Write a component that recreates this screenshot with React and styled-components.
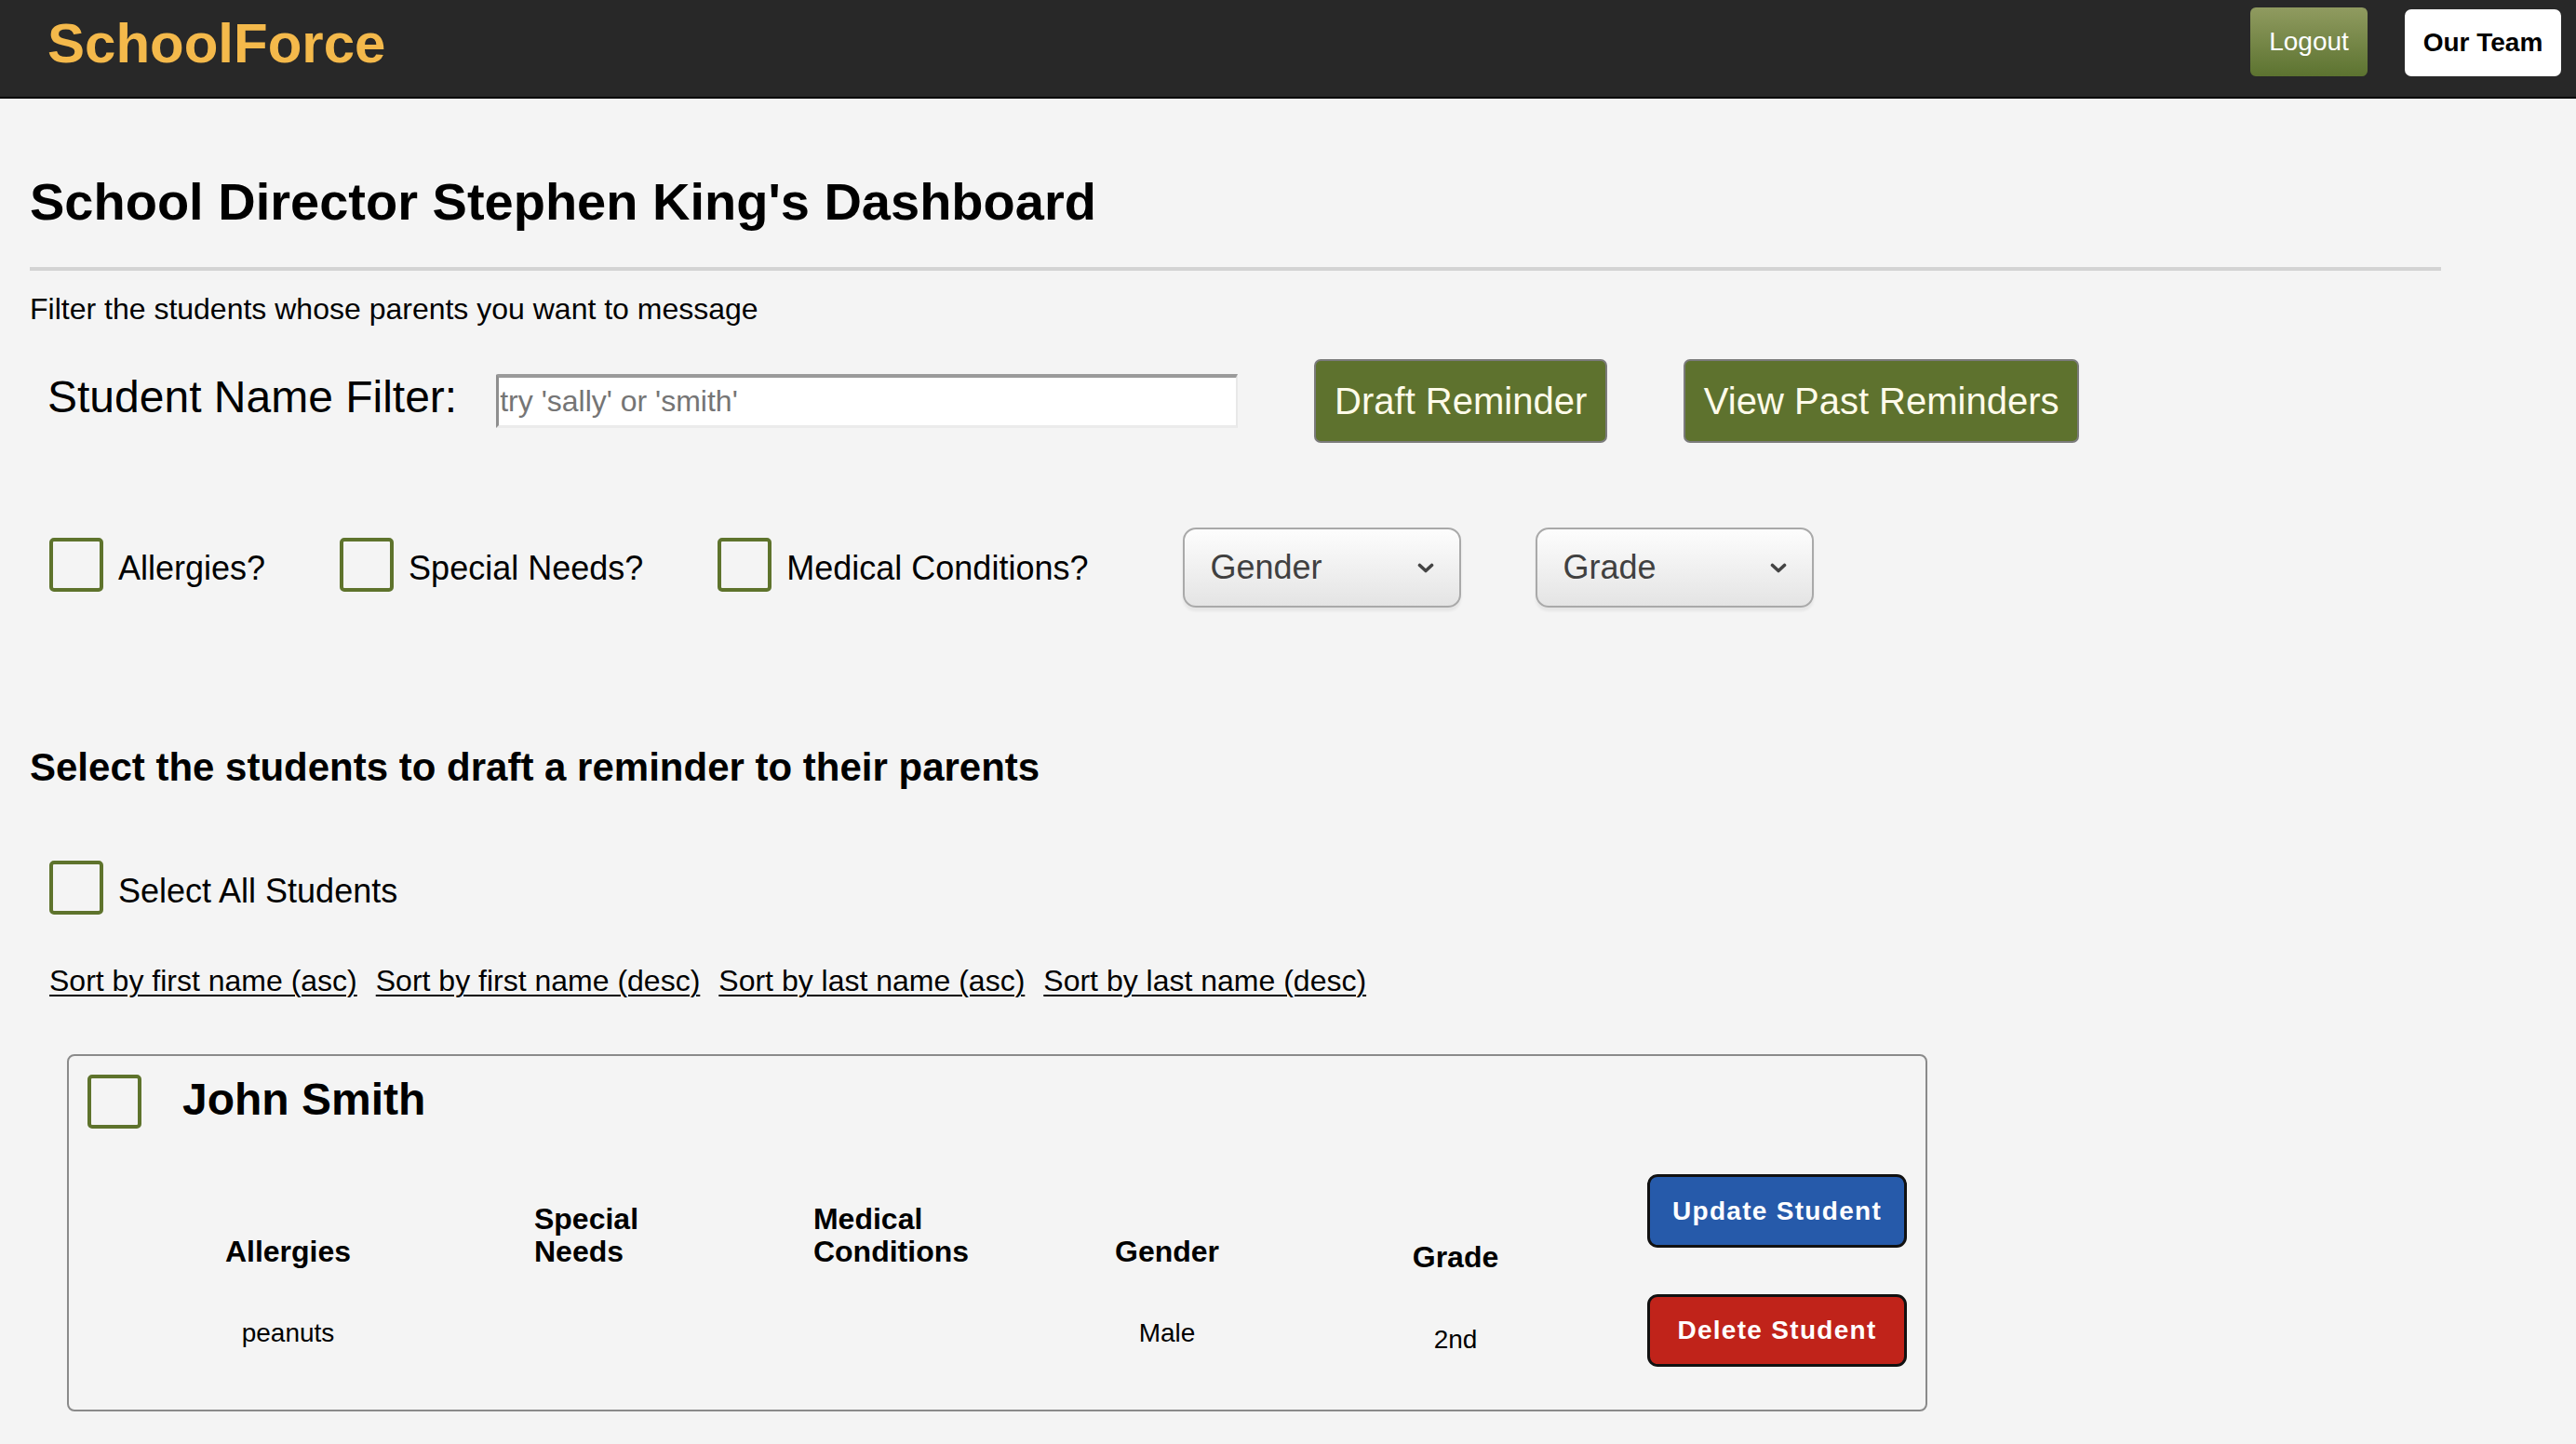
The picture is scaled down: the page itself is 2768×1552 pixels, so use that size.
import React from "react";
import styled, { createGlobalStyle } from "styled-components";

const GlobalStyle = createGlobalStyle`
  * { box-sizing: border-box; }
  html, body { margin: 0; padding: 0; background: #f4f4f4; }
  body {
    font-family: "Liberation Sans", Arial, Helvetica, sans-serif;
    color: #000;
  }
`;

const Page = styled.div`
  min-height: 1552px;
  background: #f4f4f4;
`;

const TopBar = styled.header`
  height: 106px;
  background: #282828;
  border-bottom: 2px solid #000;
  display: flex;
  justify-content: space-between;
  align-items: flex-start;
  padding: 0 16px 0 51px;
`;

const Logo = styled.div`
  margin-top: 12px;
  font-size: 60px;
  line-height: 69px;
  font-weight: 700;
  color: #f4b94b;
`;

const Nav = styled.nav`
  display: flex;
  align-items: flex-start;
  gap: 40px;
  margin-top: 8px;
`;

const LogoutButton = styled.button`
  width: 126px;
  height: 74px;
  border: none;
  border-radius: 6px;
  background: linear-gradient(#909b60, #5c7330);
  color: #fff;
  font-family: inherit;
  font-size: 28px;
  display: flex;
  align-items: center;
  justify-content: center;
  padding: 0;
`;

const TeamButton = styled.button`
  width: 168px;
  height: 72px;
  margin-top: 2px;
  border: none;
  border-radius: 7px;
  background: #fff;
  color: #000;
  font-family: inherit;
  font-size: 28px;
  font-weight: 700;
  display: flex;
  align-items: center;
  justify-content: center;
  padding: 0;
`;

const Main = styled.main`
  padding: 79px 0 80px 32px;
`;

const Title = styled.h1`
  margin: 0;
  font-size: 56px;
  line-height: 64px;
  font-weight: 700;
`;

const Divider = styled.hr`
  width: 2591px;
  height: 4px;
  margin: 38px 0 0;
  border: none;
  background: #d3d3d3;
`;

const Intro = styled.p`
  margin: 23px 0 0;
  font-size: 32px;
  line-height: 37px;
`;

const FilterRow = styled.div`
  display: flex;
  align-items: center;
  height: 90px;
  margin-top: 35px;
  padding-left: 19px;
`;

const FilterLabel = styled.label`
  font-size: 48px;
  line-height: 55px;
  margin: 0 42px 9px 0;
`;

const NameInput = styled.input`
  width: 797px;
  height: 58px;
  background: #fff;
  border-style: solid;
  border-width: 4px 2px 3px 3px;
  border-color: #9a9a9a #e8e8e8 #ebebeb #8e8e8e;
  border-radius: 2px 0 0 0;
  padding: 0 0 0 1px;
  font-family: inherit;
  font-size: 32px;
  color: #000;
  outline: none;
  &::placeholder { color: #757575; }
`;

const ActionButton = styled.button`
  width: ${(p) => p.$w}px;
  height: 90px;
  margin-left: 82px;
  padding: 0;
  border: 2px solid #7b7b7b;
  border-radius: 7px;
  background: #5e722e;
  color: #fffbea;
  font-family: inherit;
  font-size: 40px;
  display: flex;
  align-items: center;
  justify-content: center;
`;

const CheckRow = styled.div`
  display: flex;
  align-items: center;
  gap: 80px;
  height: 86px;
  margin-top: 91px;
  padding-left: 21px;
`;

const CheckGroup = styled.label`
  display: flex;
  align-items: center;
  gap: 16px;
`;

const Box = styled.span`
  display: block;
  flex-shrink: 0;
  width: 58px;
  height: 58px;
  border: 4px solid #5e732c;
  border-radius: 5px;
  margin-bottom: 7px;
`;

const CheckText = styled.span`
  font-size: 36px;
  line-height: 41px;
`;

const SelectBox = styled.div`
  width: 299px;
  height: 86px;
  margin-left: ${(p) => p.$offset || 0}px;
  border: 2px solid #a9a9a9;
  border-radius: 14px;
  background: linear-gradient(#fdfdfd, #e4e4e4);
  box-shadow: 0 4px 3px rgba(0, 0, 0, 0.06);
  display: flex;
  align-items: center;
  justify-content: space-between;
  padding: 0 27px 0 27px;
  font-size: 36px;
  color: #404040;
`;

const SectionTitle = styled.h2`
  margin: 148px 0 0;
  font-size: 42px;
  line-height: 48px;
  font-weight: 700;
`;

const SelectAllRow = styled.label`
  display: flex;
  align-items: center;
  gap: 16px;
  margin-top: 76px;
  padding-left: 21px;
`;

const SortBar = styled.div`
  display: flex;
  gap: 20px;
  margin-top: 46px;
  padding-left: 21px;
`;

const SortLink = styled.a`
  font-size: 32px;
  line-height: 37px;
  color: #000;
  text-decoration: underline;
  text-decoration-thickness: 2px;
  text-underline-offset: 4px;
`;

const StudentCard = styled.section`
  width: 1999px;
  margin: 60px 0 0 40px;
  border: 2px solid #8a8a8a;
  border-radius: 8px;
  padding: 19px 20px 46px 20px;
`;

const CardHead = styled.div`
  display: flex;
  align-items: center;
  gap: 44px;
`;

const StudentName = styled.h3`
  margin: 0 0 11px;
  font-size: 48px;
  line-height: 55px;
  font-weight: 700;
`;

const CardBody = styled.div`
  display: flex;
  align-items: flex-start;
  margin-top: 42px;
`;

const DataGrid = styled.div`
  display: grid;
  grid-template-columns: 321px 320px 335px 258px 362px;
  align-items: end;
  margin: 31px 0 0 55px;
`;

const HeadCell = styled.div`
  justify-self: center;
  text-align: left;
  font-size: 32px;
  line-height: 35px;
  font-weight: 700;
  margin-bottom: ${(p) => (p.$drop ? -6 : 0)}px;
`;

const ValueCell = styled.div`
  align-self: start;
  text-align: center;
  font-size: 28px;
  line-height: 32px;
  padding-top: ${(p) => (p.$drop ? 61 : 54)}px;
  min-height: 32px;
`;

const ButtonStack = styled.div`
  display: flex;
  flex-direction: column;
  gap: 50px;
  margin-left: 25px;
`;

const CardButton = styled.button`
  width: 279px;
  height: ${(p) => p.$h}px;
  border: 3px solid #111;
  border-radius: 11px;
  background: ${(p) => p.$bg};
  color: #fff;
  font-family: inherit;
  font-size: 28px;
  font-weight: 700;
  letter-spacing: 1.3px;
  display: flex;
  align-items: center;
  justify-content: center;
  padding: 0;
`;

const Chevron = () => (
  <svg width="18" height="11" viewBox="0 0 18 11" aria-hidden="true">
    <path
      d="M2.5 2.5 L9 8.5 L15.5 2.5"
      fill="none"
      stroke="#444"
      strokeWidth="3.6"
      strokeLinecap="round"
      strokeLinejoin="round"
    />
  </svg>
);

const checks = ["Allergies?", "Special Needs?", "Medical Conditions?"];
const sorts = [
  "Sort by first name (asc)",
  "Sort by first name (desc)",
  "Sort by last name (asc)",
  "Sort by last name (desc)",
];

const columns = [
  { head: "Allergies", value: "peanuts" },
  { head: (<>Special<br />Needs</>), value: "" },
  { head: (<>Medical<br />Conditions</>), value: "" },
  { head: "Gender", value: "Male" },
  { head: "Grade", value: "2nd", drop: true },
];

export default function App() {
  return (
    <Page>
      <GlobalStyle />
      <TopBar>
        <Logo>SchoolForce</Logo>
        <Nav>
          <LogoutButton>Logout</LogoutButton>
          <TeamButton>Our Team</TeamButton>
        </Nav>
      </TopBar>
      <Main>
        <Title>{"School Director Stephen King's Dashboard"}</Title>
        <Divider />
        <Intro>Filter the students whose parents you want to message</Intro>
        <FilterRow>
          <FilterLabel>Student Name Filter:</FilterLabel>
          <NameInput placeholder="try 'sally' or 'smith'" />
          <ActionButton $w={315}>Draft Reminder</ActionButton>
          <ActionButton $w={425}>View Past Reminders</ActionButton>
        </FilterRow>
        <CheckRow>
          {checks.map((c) => (
            <CheckGroup key={c}>
              <Box />
              <CheckText>{c}</CheckText>
            </CheckGroup>
          ))}
          <SelectBox $offset={22}>
            <span>Gender</span>
            <Chevron />
          </SelectBox>
          <SelectBox>
            <span>Grade</span>
            <Chevron />
          </SelectBox>
        </CheckRow>
        <SectionTitle>Select the students to draft a reminder to their parents</SectionTitle>
        <SelectAllRow>
          <Box />
          <CheckText>Select All Students</CheckText>
        </SelectAllRow>
        <SortBar>
          {sorts.map((s) => (
            <SortLink key={s} href="#">{s}</SortLink>
          ))}
        </SortBar>
        <StudentCard>
          <CardHead>
            <Box />
            <StudentName>John Smith</StudentName>
          </CardHead>
          <CardBody>
            <DataGrid>
              {columns.map((c, i) => (
                <HeadCell key={"h" + i} $drop={c.drop}>{c.head}</HeadCell>
              ))}
              {columns.map((c, i) => (
                <ValueCell key={"v" + i} $drop={c.drop}>{c.value}</ValueCell>
              ))}
            </DataGrid>
            <ButtonStack>
              <CardButton $h={79} $bg="#265aaa">Update Student</CardButton>
              <CardButton $h={78} $bg="#c0231a">Delete Student</CardButton>
            </ButtonStack>
          </CardBody>
        </StudentCard>
      </Main>
    </Page>
  );
}
